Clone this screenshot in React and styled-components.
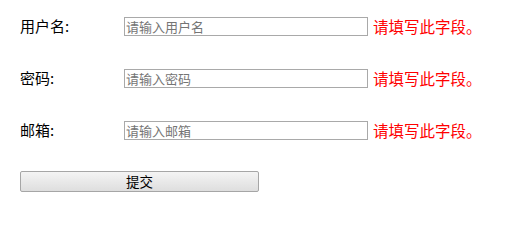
import React from "react";
import styled, { createGlobalStyle } from "styled-components";

const Global = createGlobalStyle`
  html, body { margin: 0; padding: 0; background: #fff; }
  body { font-family: "Noto Sans CJK SC", "Liberation Sans", sans-serif; color: #000; }
`;

const Form = styled.form`
  display: flex;
  flex-direction: column;
  padding: 17px 20px 0 20px;
`;

const Row = styled.div`
  display: flex;
  align-items: center;
  height: 19px;
  margin-bottom: 33px;
`;

const Label = styled.label`
  width: 104px;
  flex: none;
  font-size: 15px;
  line-height: 19px;
  position: relative;
  top: -1px;
`;

const Input = styled.input`
  box-sizing: border-box;
  width: 244px;
  height: 19px;
  margin: 0;
  padding: 0 1px;
  border: 1px solid #a9a9a9;
  font-family: "Noto Sans CJK SC", sans-serif;
  font-size: 13px;
  outline: none;
  background: #fff;
  &::placeholder { color: #757575; }
`;

const Error = styled.span`
  margin-left: 5px;
  color: #ff0000;
  font-size: 15.5px;
  line-height: 19px;
  white-space: nowrap;
`;

const Button = styled.button`
  box-sizing: border-box;
  width: 239px;
  height: 21px;
  margin-top: -2px;
  padding: 0;
  border: 1px solid #a6a6a6;
  border-radius: 2px;
  background: linear-gradient(#f4f4f4, #dedede);
  font-family: "Noto Sans CJK SC", sans-serif;
  font-size: 13.5px;
  line-height: 19px;
  color: #000;
`;

const fields = [
  { label: "用户名:", ph: "请输入用户名" },
  { label: "密码:", ph: "请输入密码" },
  { label: "邮箱:", ph: "请输入邮箱" },
];

export default function App() {
  return (
    <>
      <Global />
      <Form onSubmit={(e) => e.preventDefault()}>
        {fields.map((f) => (
          <Row key={f.label}>
            <Label>{f.label}</Label>
            <Input placeholder={f.ph} />
            <Error>请填写此字段。</Error>
          </Row>
        ))}
        <Button type="button">提交</Button>
      </Form>
    </>
  );
}
